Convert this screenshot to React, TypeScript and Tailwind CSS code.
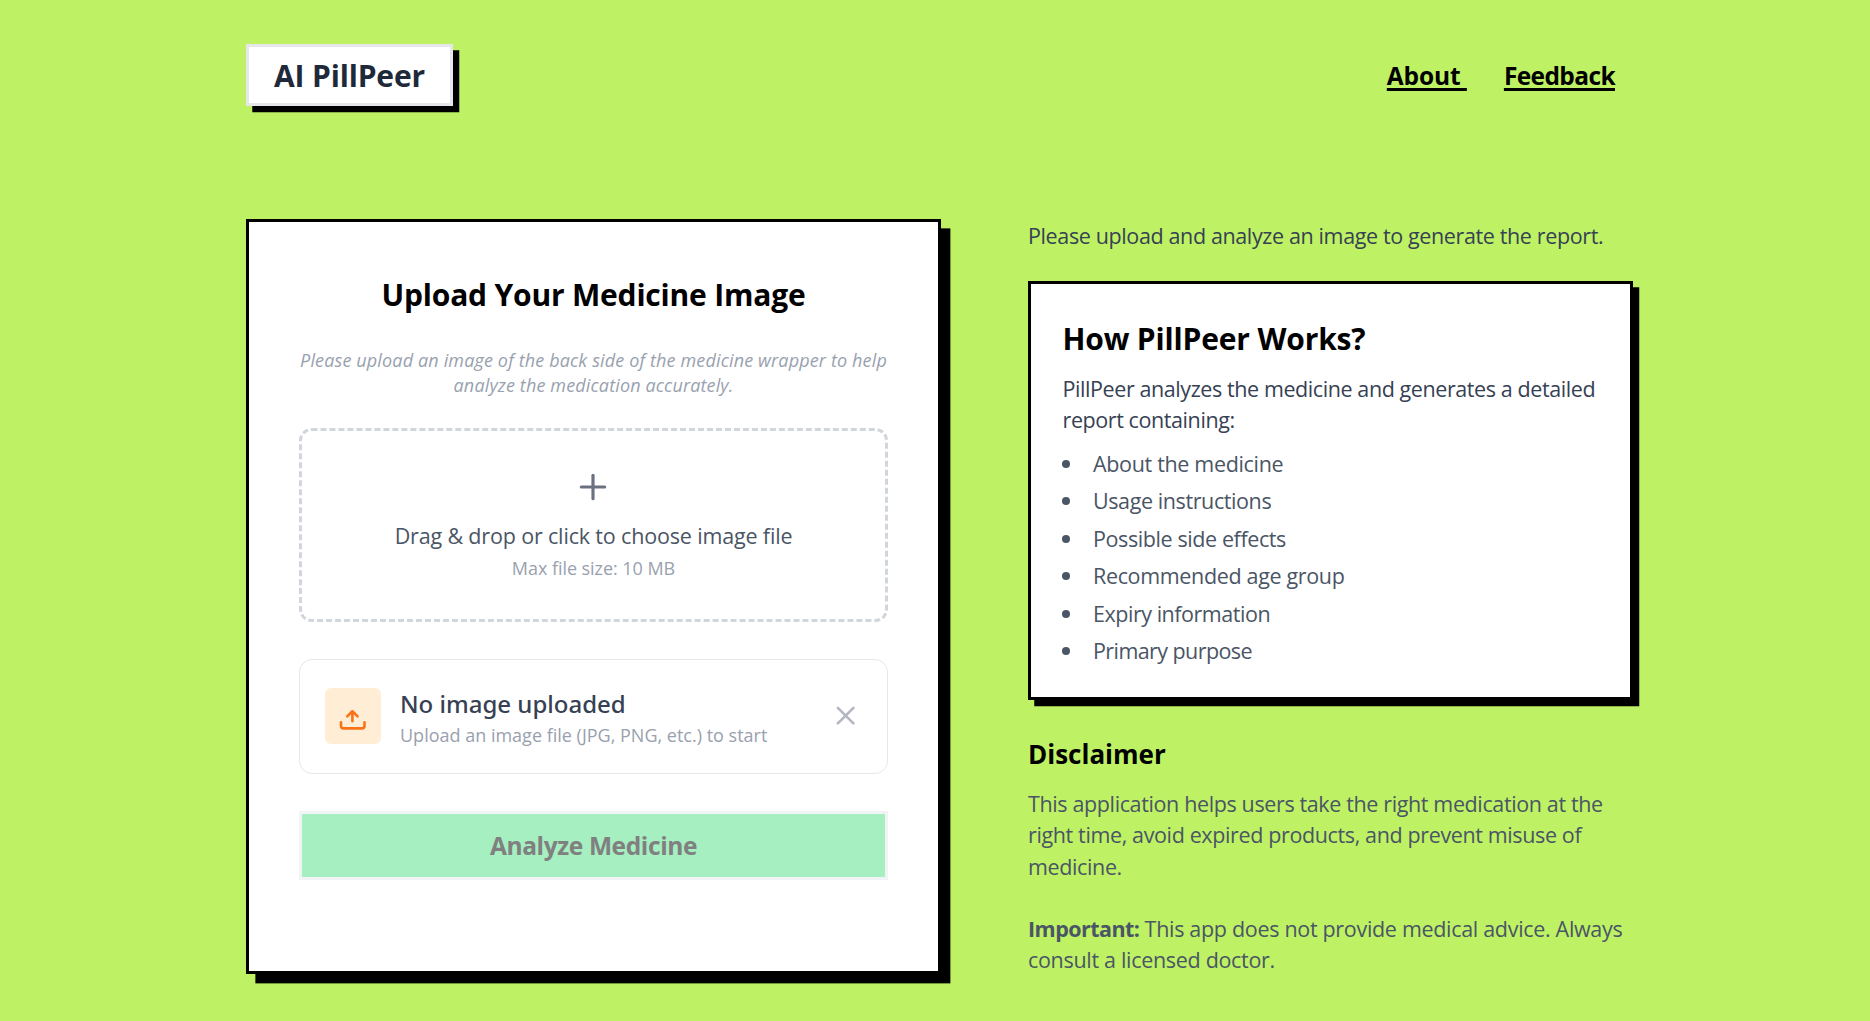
import { Plus, X } from "lucide-react";

const reportItems = [
  { label: "About the medicine", tracking: "tracking-[-0.33px]" },
  { label: "Usage instructions", tracking: "tracking-[-0.4px]" },
  { label: "Possible side effects", tracking: "tracking-[-0.4px]" },
  { label: "Recommended age group", tracking: "tracking-[-0.34px]" },
  { label: "Expiry information", tracking: "tracking-[-0.47px]" },
  { label: "Primary purpose", tracking: "tracking-[-0.58px]" },
];

function UploadIcon() {
  return (
    <svg
      className="size-14"
      viewBox="0 0 56 56"
      fill="none"
      stroke="currentColor"
      strokeWidth="2.6"
      strokeLinecap="round"
      strokeLinejoin="round"
    >
      <path d="M16 34.4v3.4a2.6 2.6 0 0 0 2.6 2.6h18.3a2.6 2.6 0 0 0 2.6-2.6v-3.4" />
      <path d="M27.4 33.3V23.3M22.2 28.4l5.2-5.1 5.2 5.1" />
    </svg>
  );
}

function Header() {
  return (
    <header className="flex h-[62px] items-center justify-between pr-[18px]">
      <div className="flex h-[62px] w-[207px] items-center justify-center border-[3px] border-gray-200 bg-white pt-0.5 shadow-[6.25px_6.25px_0_#000]">
        <h1 className="text-[30px] leading-none font-bold tracking-[-0.15px] text-gray-800">AI PillPeer</h1>
      </div>
      <nav className="flex gap-[37px] pt-0.5 text-[24.5px] font-bold text-black">
        <a className="tracking-[-0.1px] whitespace-pre underline decoration-[3px] underline-offset-[3px]">{"About "}</a>
        <a className="tracking-[-0.61px] underline decoration-[3px] underline-offset-[3px]">Feedback</a>
      </nav>
    </header>
  );
}

function UploadCard() {
  return (
    <section className="flex h-[755px] w-[695px] flex-col border-[3px] border-black bg-white px-[50px] pt-[54px] shadow-[9.375px_9.375px_0_#000]">
      <h2 className="text-center text-[30px] leading-[38px] font-bold tracking-[-0.19px] text-black">
        Upload Your Medicine Image
      </h2>
      <p className="mt-[34px] text-center text-[18px] leading-[25px] tracking-[0.14px] whitespace-nowrap text-gray-400 italic">
        Please upload an image of the back side of the medicine wrapper to help
        <br />
        analyze the medication accurately.
      </p>
      <div className="mt-[30px] flex h-[194px] flex-col items-center rounded-[12.5px] border-[3px] border-dashed border-gray-300 pt-[36px]">
        <Plus className="mr-0.5 size-10 text-gray-500" strokeWidth={1.9} />
        <p className="mt-[13px] text-[21.5px] leading-[31px] tracking-[-0.16px] text-gray-600">
          Drag &amp; drop or click to choose image file
        </p>
        <p className="mt-[5px] text-[18px] leading-[25px] tracking-[-0.05px] text-gray-400">Max file size: 10 MB</p>
      </div>
      <div className="mt-[37px] flex h-[115px] items-center rounded-[13px] border border-gray-200 pr-[26px] pb-0.5 pl-[25px]">
        <div className="size-14 rounded-md bg-[#ffedd5] text-[#f97316]">
          <UploadIcon />
        </div>
        <div className="ml-[19px] flex-1 pt-[4px]">
          <p className="font-['Noto_Sans',sans-serif] text-[24px] leading-[36px] font-medium text-gray-700">
            No image uploaded
          </p>
          <p className="text-[18px] leading-[27px] text-gray-400">Upload an image file (JPG, PNG, etc.) to start</p>
        </div>
        <X className="size-[31.25px] text-[#b4b6c0]" strokeWidth={2} />
      </div>
      <button
        disabled
        className="mt-[37px] h-[69px] border-[3px] border-[#f2f3f4] bg-[#a5efc0] pt-px text-[24.5px] leading-none font-bold tracking-[-0.38px] text-[#808080]"
      >
        Analyze Medicine
      </button>
    </section>
  );
}

function InfoColumn() {
  return (
    <section className="w-[605px]">
      <p className="pt-px text-[21.5px] leading-[31px] tracking-[-0.37px] whitespace-nowrap text-gray-700">
        Please upload and analyze an image to generate the report.
      </p>
      <div className="mt-[30px] h-[419px] border-[3px] border-black bg-white px-[31.5px] pt-[36px] shadow-[6.25px_6.25px_0_#000]">
        <h2 className="text-[30px] leading-[38px] font-bold tracking-[-0.16px] text-black">How PillPeer Works?</h2>
        <p className="mt-[15px] text-[21.5px] leading-[31.25px] tracking-[-0.41px] whitespace-nowrap text-gray-700">
          PillPeer analyzes the medicine and generates a detailed
          <br />
          report containing:
        </p>
        <ul className="mt-3 flex flex-col gap-[6.25px] text-[21.5px] leading-[31.25px] text-gray-600">
          {reportItems.map(({ label, tracking }) => (
            <li key={label} className="flex items-center gap-[23.5px]">
              <span className="mt-px -ml-px size-2 rounded-full bg-gray-600" />
              <span className={tracking}>{label}</span>
            </li>
          ))}
        </ul>
      </div>
      <h3 className="mt-[37px] text-[26px] leading-[35px] font-bold text-black">Disclaimer</h3>
      <p className="mt-[16px] text-[21.5px] leading-[31.25px] tracking-[-0.37px] whitespace-nowrap text-gray-600">
        This application helps users take the right medication at the
        <br />
        right time, avoid expired products, and prevent misuse of
        <br />
        medicine.
      </p>
      <p className="mt-[31px] text-[21.5px] leading-[31.25px] tracking-[-0.31px] whitespace-nowrap text-gray-600">
        <strong className="font-bold tracking-[-0.55px]">Important:</strong> This app does not provide medical advice. Always
        <br />
        consult a licensed doctor.
      </p>
    </section>
  );
}

export default function App() {
  return (
    <div className="h-[1021px] overflow-hidden bg-[#bef264] pt-[44px] pl-[246px] font-['Open_Sans',sans-serif]">
      <div className="w-[1387px]">
        <Header />
        <main className="mt-[113px] flex justify-between">
          <UploadCard />
          <InfoColumn />
        </main>
      </div>
    </div>
  );
}
